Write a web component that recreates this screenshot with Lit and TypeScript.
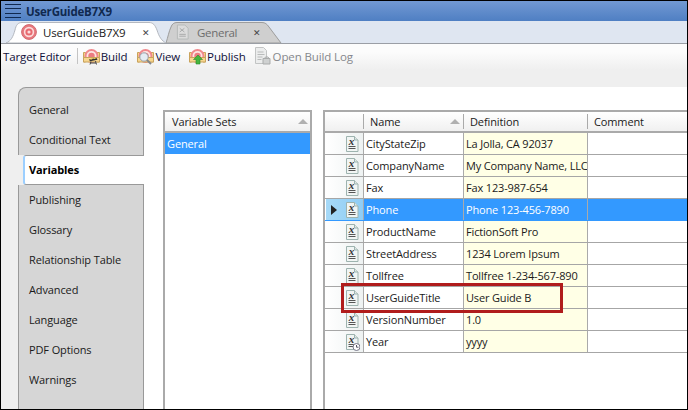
import { LitElement, html, css, svg } from "lit";
import { customElement } from "lit/decorators.js";

const SIDE_TABS = [
  "General",
  "Conditional Text",
  "Variables",
  "Publishing",
  "Glossary",
  "Relationship Table",
  "Advanced",
  "Language",
  "PDF Options",
  "Warnings",
];

const ROWS: [string, string][] = [
  ["CityStateZip", "La Jolla, CA 92037"],
  ["CompanyName", "My Company Name, LLC"],
  ["Fax", "Fax 123-987-654"],
  ["Phone", "Phone 123-456-7890"],
  ["ProductName", "FictionSoft Pro"],
  ["StreetAddress", "1234 Lorem Ipsum"],
  ["Tollfree", "Tollfree 1-234-567-890"],
  ["UserGuideTitle", "User Guide B"],
  ["VersionNumber", "1.0"],
  ["Year", "yyyy"],
];

/** Page with an italic x and two rules, used for variables. */
const docIcon = (clock = false) => html`
  <svg class="doc" width="15" height="18" viewBox="0 0 15 18">
    <path d="M1.5 1.5h8l3.500 3.500v11.500h-11.500z" fill="#f1f5f4" stroke="#9db3af" />
    <path d="M9.500 1.500v3.500h3.500" fill="#dfe8e6" stroke="#9db3af" />
    <text x="3.800" y="10" class="doc-x">x</text>
    <path d="M3.500 11.500h7M3.500 13.500h7" stroke="#555" />
    ${clock
      ? svg`<circle cx="11.500" cy="14" r="3.500" fill="#fff" stroke="#778" />
          <path d="M11.500 12v2.200h2" fill="none" stroke="#556" />`
      : ""}
  </svg>
`;

const targetIcon = () => html`
  <svg width="16" height="16" viewBox="0 0 16 16">
    <circle cx="8" cy="8" r="7.400" fill="#e8797e" stroke="#d26a70" />
    <circle cx="8" cy="8" r="5.200" fill="#fbdcdc" />
    <circle cx="8" cy="8" r="3.600" fill="#e8696f" />
    <circle cx="8" cy="8" r="1.600" fill="#fbdcdc" />
  </svg>
`;

/** Orange folder with target arcs, the badge is drawn on top of it. */
const folderIcon = (badge: unknown) => html`
  <svg width="17" height="17" viewBox="0 0 17 17">
    <path d="M.5 4.500h2v9.500h-2z" fill="#f7d48c" stroke="#c9a35c" />
    <path d="M14 4.500h2.500v9.500h-2.500z" fill="#f7d48c" stroke="#c9a35c" />
    <circle cx="8.500" cy="8" r="7" fill="#f0888c" />
    <circle cx="8.500" cy="8" r="5" fill="#fde6e3" />
    <circle cx="8.500" cy="8" r="3.200" fill="#ec7c80" />
    <path d="M.5 9.500h16v4.500h-16z" fill="#f8d68f" stroke="#c9a35c" />
    ${badge}
  </svg>
`;

const buildBadge = svg`
  <path d="M6 11.500l7.500-1.500 1 1.800-7.500 1.500z" fill="#2f2f2f" />
  <path d="M7.500 11.300l1.800-.4M10.800 10.600l1.800-.4" stroke="#f0d040" />
  <path d="M8 13.500l-1 3M12.500 13l1 3.500M7.500 15h5.500" stroke="#444" fill="none" />
`;

const viewBadge = svg`
  <circle cx="7" cy="9" r="4.200" fill="#e4ecf3" stroke="#9a9fa6" />
  <path d="M10 12l4 4" stroke="#85878a" stroke-width="2" />
`;

const publishBadge = svg`
  <path d="M9 7l4.500 4.500h-2.500v4.500h-4v-4.500h-2.500z" fill="#45b53f" stroke="#2a8a2a" stroke-width=".6" />
`;

const logIcon = () => html`
  <svg width="17" height="18" viewBox="0 0 17 18">
    <path d="M1.500 .5h8l3 3v13h-11z" fill="#eceded" stroke="#c2c4c4" />
    <path d="M3.500 5h6M3.500 7.500h7M3.500 10h5M3.500 12.500h4" stroke="#b9bbbb" />
    <path d="M9 11.500h7v5.500h-7z" fill="#cfd1d1" stroke="#a9abab" />
    <path d="M10.500 11.500l1-1.500h2.500l1 1.500" fill="none" stroke="#a9abab" />
  </svg>
`;

@customElement("app-root")
export class AppRoot extends LitElement {
  static styles = css`
    :host {
      display: flex;
      flex-direction: column;
      width: 688px;
      height: 410px;
      box-sizing: border-box;
      border: 1px solid #000;
      overflow: hidden;
      background: #efefef;
      font-family: "Open Sans", "Noto Sans", sans-serif;
      font-size: 11px;
      letter-spacing: -0.12px;
      color: #1a1a1a;
    }

    .title {
      display: flex;
      align-items: center;
      gap: 5px;
      height: 20px;
      flex: none;
      padding-left: 4px;
      background: linear-gradient(#7299d3, #4f7fc3);
      color: #10294f;
      font-weight: 700;
      font-size: 11.5px;
      letter-spacing: -0.2px;
    }

    .burger {
      display: flex;
      flex-direction: column;
      justify-content: space-between;
      width: 16px;
      height: 15px;
    }

    .burger i {
      display: block;
      height: 1px;
      background: #10294f;
    }

    .tabs {
      display: flex;
      flex: none;
      height: 22px;
      box-sizing: content-box;
      padding-left: 5px;
      background: #dfe6f1;
      border-bottom: 1px solid #9a9ea5;
    }

    .tab {
      position: relative;
      display: flex;
      align-items: center;
      height: 22px;
      font-size: 11.5px;
    }

    .tab > svg.shape {
      position: absolute;
      left: 0;
      top: 0;
    }

    .tab > :not(.shape) {
      position: relative;
    }

    .tab.first {
      width: 160px;
      z-index: 1;
      padding-left: 15px;
      box-sizing: border-box;
    }

    .tab.second {
      width: 116px;
      padding-left: 10px;
      box-sizing: border-box;
      color: #6d6d6d;
    }

    .tab .label {
      margin-left: 6px;
    }

    .tab.second .label {
      margin-left: 7px;
      letter-spacing: -0.3px;
    }

    .tab .close {
      position: absolute;
      top: 5px;
      font-size: 9px;
      color: #444;
    }

    .first .close {
      left: 136px;
    }

    .second .close {
      left: 87px;
    }

    .toolbar {
      display: flex;
      align-items: center;
      flex: none;
      height: 26px;
      padding: 0 0 2px 2px;
      box-sizing: border-box;
      background: linear-gradient(#fcfcfc 30%, #efefef);
      font-size: 11.5px;
      color: #10103a;
    }

    .sep {
      width: 1px;
      height: 16px;
      margin: 0 5px 0 6px;
      background: #c4c4c4;
    }

    .tool {
      display: flex;
      align-items: center;
      gap: 1px;
      margin-right: 9px;
    }

    .tool.build {
      margin-right: 10px;
    }

    .tool.publish {
      margin-right: 8px;
    }

    .tool.off {
      color: #85878c;
      gap: 2px;
    }

    .main {
      display: flex;
      flex: 1;
      min-height: 0;
      margin: 17px 0 0 17px;
    }

    .rail {
      display: flex;
      flex-direction: column;
      flex: none;
      width: 126px;
    }

    .rail-top {
      height: 8px;
      flex: none;
      box-sizing: border-box;
      background: #d6d6d6;
      border: 1px solid #999;
      border-width: 1px 1px 0 1px;
      border-top-left-radius: 8px;
    }

    .rail-item {
      display: flex;
      align-items: center;
      height: 30px;
      flex: none;
      box-sizing: border-box;
      padding: 0 0 1px 10px;
      background: #d6d6d6;
      border-left: 1px solid #999;
      border-right: 1px solid #999;
    }

    .rail-item.on {
      margin-left: 5px;
      padding-left: 4px;
      background: #fff;
      border: 1px solid #999;
      border-left: 2px solid #9ccfff;
      border-right: none;
      border-radius: 3px 0 0 3px;
      font-weight: 700;
      color: #000;
    }

    .rail-rest {
      flex: 1;
      background: #d6d6d6;
      border-left: 1px solid #999;
      border-right: 1px solid #999;
    }

    .content {
      display: flex;
      flex: 1;
      min-width: 0;
      gap: 11px;
      padding: 23px 0 0 19px;
      background: #fff;
    }

    .sets {
      flex: none;
      width: 149px;
      box-sizing: border-box;
      border: 2px solid #aaa;
      border-width: 2px 2px 0 2px;
    }

    .head {
      display: flex;
      align-items: center;
      height: 21px;
      box-sizing: border-box;
      background: linear-gradient(#fff, #f0f0f0);
      border-bottom: 2px solid #aaa;
    }

    .sets .head {
      padding: 0 2px 0 7px;
      justify-content: space-between;
    }

    .arrow {
      width: 0;
      height: 0;
      border: 5px solid transparent;
      border-top: none;
      border-bottom: 5px solid #b0b0b0;
    }

    .set-row {
      display: flex;
      align-items: center;
      height: 21px;
      padding-left: 2px;
      background: #3399ff;
      color: #fff;
    }

    .grid {
      position: relative;
      flex: 1;
      min-width: 0;
      border-left: 2px solid #aaa;
      border-top: 2px solid #aaa;
    }

    .line {
      display: grid;
      grid-template-columns: 38px 100px 124px 1fr;
      height: 22px;
      box-sizing: border-box;
      border-bottom: 1px solid #a6a6a6;
    }

    .line.head {
      display: grid;
      height: 21px;
      border-bottom: 2px solid #aaa;
    }

    .cell {
      display: flex;
      align-items: center;
      min-width: 0;
      padding-left: 2px;
      border-left: 1px solid #aaa;
      white-space: nowrap;
    }

    .head .cell {
      padding-left: 6px;
      justify-content: space-between;
    }

    .head .cell .arrow {
      margin-right: 3px;
    }

    .cell.stub {
      display: flex;
      align-items: center;
      justify-content: flex-end;
      padding: 0 3px 0 0;
      border-left: none;
      margin-left: 1px;
      background: linear-gradient(90deg, #fff, #eef2f2);
    }

    .def {
      background: #ffffe6;
      letter-spacing: -0.16px;
    }

    .line.sel {
      border-bottom-color: #3399ff;
    }

    .sel .cell {
      background: #3399ff;
      color: #fff;
    }

    .sel .cell.stub {
      justify-content: space-between;
      padding-left: 5px;
      background: linear-gradient(90deg, #a6d9f7, #8fcdf5);
    }

    .caret {
      width: 0;
      height: 0;
      border: 5px solid transparent;
      border-left: 6px solid #222;
      border-right: none;
    }

    .doc {
      display: block;
    }

    .doc-x {
      font-family: "Liberation Serif", serif;
      font-style: italic;
      font-weight: 700;
      font-size: 11px;
      fill: #333;
    }

    .mark {
      position: absolute;
      left: 16px;
      top: 171px;
      width: 222px;
      height: 30px;
      box-sizing: border-box;
      border: 3px solid #b01c1c;
    }
  `;

  render() {
    return html`
      <div class="title">
        <div class="burger"><i></i><i></i><i></i><i></i></div>
        UserGuideB7X9
      </div>
      <div class="tabs">
        <div class="tab first">
          <svg class="shape" width="160" height="22" viewBox="0 0 160 22">
            <path
              d="M0 22C5 20 7 16 9 9 10 4 12 1.500 16 1.500H143C147 1.500 149 4 151 9 153 16 156 20 160 22z"
              fill="#fff"
              stroke="#b4b8bf"
            />
          </svg>
          ${targetIcon()}
          <span class="label">UserGuideB7X9</span>
          <span class="close">✕</span>
        </div>
        <div class="tab second">
          <svg class="shape" width="116" height="22" viewBox="0 0 116 22">
            <path
              d="M0 22C2 16 3 10 5 6 6 3 8 1.500 11 1.500H96C99 1.500 101 3 103 6L115 22z"
              fill="#cfcfcf"
              stroke="#9c9c9c"
            />
          </svg>
          <svg width="14" height="18" viewBox="0 0 15 18">
            <path d="M1.500 1.500h8l3.500 3.500v11.500h-11.500z" fill="#dcdcdc" stroke="#b5b9b8" />
            <path d="M3.500 11.500h7M3.500 13.500h7M4 5l5 4M9 5l-5 4" stroke="#a6a8a8" />
          </svg>
          <span class="label">General</span>
          <span class="close">✕</span>
        </div>
      </div>
      <div class="toolbar">
        <span>Target Editor</span>
        <div class="sep"></div>
        <div class="tool build">${folderIcon(buildBadge)}<span>Build</span></div>
        <div class="tool">${folderIcon(viewBadge)}<span>View</span></div>
        <div class="tool publish">${folderIcon(publishBadge)}<span>Publish</span></div>
        <div class="tool off">${logIcon()}<span>Open Build Log</span></div>
      </div>
      <div class="main">
        <div class="rail">
          <div class="rail-top"></div>
          ${SIDE_TABS.map(
            (t) => html`<div class="rail-item ${t === "Variables" ? "on" : ""}">${t}</div>`
          )}
          <div class="rail-rest"></div>
        </div>
        <div class="content">
          <div class="sets">
            <div class="head"><span>Variable Sets</span><span class="arrow"></span></div>
            <div class="set-row">General</div>
          </div>
          <div class="grid">
            <div class="line head">
              <div class="cell stub"></div>
              <div class="cell"><span>Name</span><span class="arrow"></span></div>
              <div class="cell"><span>Definition</span></div>
              <div class="cell"><span>Comment</span></div>
            </div>
            ${ROWS.map(
              ([name, def]) => html`
                <div class="line ${name === "Phone" ? "sel" : ""}">
                  <div class="cell stub">
                    ${name === "Phone" ? html`<span class="caret"></span>` : ""}
                    ${docIcon(name === "Year")}
                  </div>
                  <div class="cell">${name}</div>
                  <div class="cell def">${def}</div>
                  <div class="cell"></div>
                </div>
              `
            )}
            <div class="mark"></div>
          </div>
        </div>
      </div>
    `;
  }
}
